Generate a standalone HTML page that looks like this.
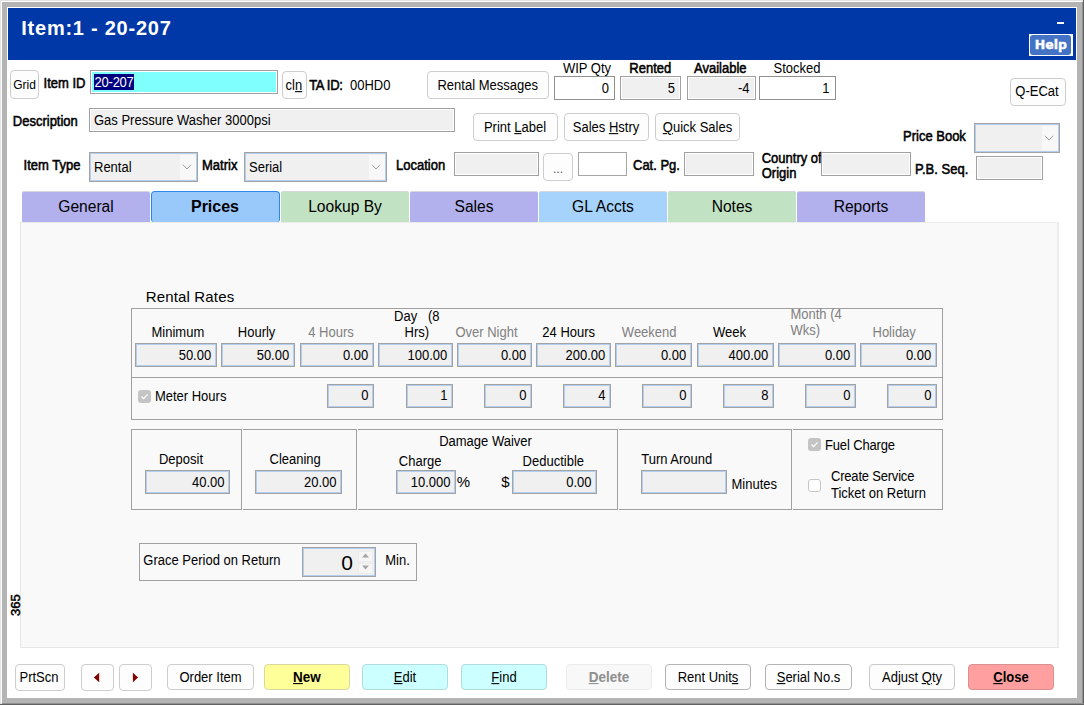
<!DOCTYPE html>
<html lang="en"><head><meta charset="utf-8"><title>Item:1 - 20-207</title>
<style>
html,body{margin:0;padding:0;}
body{width:1084px;height:705px;overflow:hidden;background:#fff;font-family:"Liberation Sans",sans-serif;color:#000;}
#win{position:relative;width:1084px;height:705px;overflow:hidden;background:#fff;}
#win div{position:absolute;box-sizing:border-box;}
.t{line-height:1;white-space:nowrap;transform:scaleY(1.08);transform-origin:0 84.65%;}
.fb{-webkit-text-stroke:0.5px #000;}
.btn{background:#fdfdfd;border:1px solid #cdcdcd;border-radius:4px;}
.inp{background:#f0f0f0;border:1px solid #a0a0a0;box-shadow:inset 0 0 0 1px #fff;}
.inw{background:#fff;border:1px solid #909090;}
.inb{background:#f0f0f0;border:1px solid #a3a3a3;box-shadow:inset 0 0 0 1px #b2cef0;}
.cmb{background:#f0f0f0;border:1px solid #a3a3a3;box-shadow:inset 0 0 0 1px #b2cef0;}
.grp{border:1px solid #a0a0a0;}
u{text-decoration:underline;text-underline-offset:1px;}

</style></head><body>
<div id="win">
<div class="" style="left:0px;top:0px;width:1084px;height:705px;background:#e3e3e3;"></div>
<div class="" style="left:1px;top:1px;width:1081px;height:702px;background:#fff;"></div>
<div class="" style="left:2px;top:2px;width:1081px;height:702px;background:#b4b4b4;"></div>
<div class="" style="left:1082px;top:2px;width:1px;height:703px;background:#909090;"></div>
<div class="" style="left:1083px;top:0px;width:1px;height:705px;background:#626262;"></div>
<div class="" style="left:2px;top:703px;width:1082px;height:1px;background:#909090;"></div>
<div class="" style="left:0px;top:704px;width:1084px;height:1px;background:#626262;"></div>
<div class="" style="left:7px;top:7px;width:1070px;height:691px;background:#fff;"></div>
<div class="" style="left:8px;top:8px;width:1068px;height:52px;background:#0038a8;"></div>
<div class="t" style="left:21.3px;top:18.47px;font-size:20px;font-weight:bold;color:#fff;letter-spacing:0.75px;transform:none;">Item:1 - 20-207</div>
<div class="" style="left:1057px;top:22px;width:7px;height:2px;background:#fff;"></div>
<div class="" style="left:1029px;top:34px;width:44px;height:22px;background:#fff;"></div>
<div class="" style="left:1030px;top:35px;width:41px;height:20px;background:#4472c4;border-radius:3px;"></div>
<div class="t" style="left:850.9px;width:400px;text-align:center;top:38.72px;font-size:12.5px;font-weight:bold;color:#fff;-webkit-text-stroke:0.4px #fff;font-family:'DejaVu Sans','Liberation Sans',sans-serif;transform:none;">Help</div>
<div class="btn" style="left:10px;top:70px;width:29px;height:29px;"></div>
<div class="t" style="left:-175.5px;width:400px;text-align:center;top:78.84px;font-size:12px;">Grid</div>
<div class="t fb" style="left:43.6px;top:76.50px;font-size:13px;">Item ID</div>
<div class="" style="left:90px;top:70px;width:188px;height:24px;background:#80ffff;border:1px solid #a0a0a6;box-shadow:inset 0 0 0 1px #fff;"></div>
<div class="" style="left:94px;top:74px;width:40px;height:16px;background:#000080;"></div>
<div class="t" style="left:94.6px;top:76.00px;font-size:13px;color:#fff;letter-spacing:-0.25px;">20-207</div>
<div class="btn" style="left:282px;top:71px;width:25px;height:28px;"></div>
<div class="t" style="left:93.9px;width:400px;text-align:center;top:78.70px;font-size:13px;">cl<u>n</u></div>
<div class="t fb" style="left:309.2px;top:78.60px;font-size:13px;letter-spacing:-0.3px;">TA ID:</div>
<div class="t" style="left:350px;top:78.60px;font-size:13px;">00HD0</div>
<div class="btn" style="left:426.5px;top:71px;width:122.5px;height:28px;"></div>
<div class="t" style="left:287.7px;width:400px;text-align:center;top:79.00px;font-size:13px;">Rental Messages</div>
<div class="t" style="left:387px;width:400px;text-align:center;top:61.50px;font-size:13px;">WIP Qty</div>
<div class="inw" style="left:554px;top:76px;width:61px;height:24px;"></div>
<div class="t" style="right:475px;top:81.50px;font-size:13px;">0</div>
<div class="t fb" style="left:450.3px;width:400px;text-align:center;top:61.50px;font-size:13px;">Rented</div>
<div class="inp" style="left:620px;top:76px;width:61px;height:24px;"></div>
<div class="t" style="right:409px;top:81.50px;font-size:13px;">5</div>
<div class="t fb" style="left:520.3px;width:400px;text-align:center;top:61.50px;font-size:13px;">Available</div>
<div class="inp" style="left:687px;top:76px;width:69px;height:24px;"></div>
<div class="t" style="right:334.5px;top:81.50px;font-size:13px;">-4</div>
<div class="t" style="left:597px;width:400px;text-align:center;top:61.50px;font-size:13px;">Stocked</div>
<div class="inw" style="left:759px;top:76px;width:77px;height:24px;"></div>
<div class="t" style="right:254.5px;top:81.50px;font-size:13px;">1</div>
<div class="btn" style="left:1010px;top:78px;width:55.5px;height:27.5px;"></div>
<div class="t" style="left:837px;width:400px;text-align:center;top:85.20px;font-size:13px;">Q-ECat</div>
<div class="t fb" style="left:12.8px;top:115.00px;font-size:13px;">Description</div>
<div class="inp" style="left:89px;top:108px;width:366px;height:24px;"></div>
<div class="t" style="left:94px;top:113.50px;font-size:13px;">Gas Pressure Washer 3000psi</div>
<div class="btn" style="left:473px;top:113px;width:85px;height:28px;"></div>
<div class="t" style="left:315px;width:400px;text-align:center;top:121.00px;font-size:13px;">Print <u>L</u>abel</div>
<div class="btn" style="left:564px;top:113px;width:85px;height:28px;"></div>
<div class="t" style="left:406px;width:400px;text-align:center;top:121.00px;font-size:13px;">Sales <u>H</u>stry</div>
<div class="btn" style="left:655px;top:113px;width:85px;height:28px;"></div>
<div class="t" style="left:497.5px;width:400px;text-align:center;top:121.00px;font-size:13px;"><u>Q</u>uick Sales</div>
<div class="t fb" style="left:903px;top:130.20px;font-size:13px;">Price Book</div>
<div class="cmb" style="left:974px;top:123px;width:86px;height:30px;"></div>
<div class="" style="left:1042px;top:126px;width:16px;height:24px;background:#f8f8f8;"></div>
<svg style="position:absolute;left:1043.2px;top:133.8px" width="12" height="8" viewBox="0 0 12 8"><path d="M2 1.8 L6 6 L10 1.8" fill="none" stroke="#9c9c9c" stroke-width="1"/></svg>
<div class="t fb" style="left:23.6px;top:159.00px;font-size:13px;">Item Type</div>
<div class="cmb" style="left:89px;top:152px;width:109px;height:30px;"></div>
<div class="" style="left:180px;top:155px;width:16px;height:24px;background:#f8f8f8;"></div>
<svg style="position:absolute;left:181.2px;top:162.8px" width="12" height="8" viewBox="0 0 12 8"><path d="M2 1.8 L6 6 L10 1.8" fill="none" stroke="#9c9c9c" stroke-width="1"/></svg>
<div class="t" style="left:94px;top:161.00px;font-size:13px;">Rental</div>
<div class="t fb" style="left:202px;top:159.00px;font-size:13px;">Matrix</div>
<div class="cmb" style="left:244px;top:152px;width:143px;height:30px;"></div>
<div class="" style="left:369px;top:155px;width:16px;height:24px;background:#f8f8f8;"></div>
<svg style="position:absolute;left:370.2px;top:162.8px" width="12" height="8" viewBox="0 0 12 8"><path d="M2 1.8 L6 6 L10 1.8" fill="none" stroke="#9c9c9c" stroke-width="1"/></svg>
<div class="t" style="left:249px;top:161.00px;font-size:13px;">Serial</div>
<div class="t fb" style="left:396px;top:159.00px;font-size:13px;">Location</div>
<div class="inp" style="left:454px;top:152px;width:85px;height:24px;"></div>
<div class="btn" style="left:543px;top:153px;width:30px;height:28px;"></div>
<div class="t" style="left:358px;width:400px;text-align:center;top:162.84px;font-size:12px;color:#555;">...</div>
<div class="inw" style="left:578px;top:152px;width:49px;height:24px;border-color:#a6a6a6;"></div>
<div class="t fb" style="left:633px;top:158.60px;font-size:13px;">Cat. Pg.</div>
<div class="inp" style="left:684px;top:152px;width:70px;height:24px;"></div>
<div class="t fb" style="left:761.7px;top:151.60px;font-size:13px;">Country of</div>
<div class="t fb" style="left:761.7px;top:166.50px;font-size:13px;">Origin</div>
<div class="inp" style="left:821px;top:152px;width:90px;height:24px;"></div>
<div class="t fb" style="left:915px;top:162.80px;font-size:13px;">P.B. Seq.</div>
<div class="inp" style="left:976px;top:156px;width:67px;height:24px;"></div>
<div class="" style="left:22px;top:191px;width:128px;height:31px;background:#b3b0ee;border-top:1px solid #d6d6dc;border-radius:2px 2px 0 0;"></div>
<div class="t" style="left:-114px;width:400px;text-align:center;top:198.79px;font-size:15.6px;transform:none;">General</div>
<div class="" style="left:151px;top:191px;width:129px;height:31px;background:#99c9fb;border:1px solid #2a86ea;border-bottom:none;border-radius:4px 4px 3px 3px;"></div>
<div class="t" style="left:15px;width:400px;text-align:center;top:199.36px;font-size:16px;font-weight:bold;transform:none;">Prices</div>
<div class="" style="left:281px;top:191px;width:128px;height:31px;background:#c1e2c3;border-top:1px solid #d6d6dc;border-radius:2px 2px 0 0;"></div>
<div class="t" style="left:145px;width:400px;text-align:center;top:198.79px;font-size:15.6px;transform:none;">Lookup By</div>
<div class="" style="left:410px;top:191px;width:128px;height:31px;background:#b3b0ee;border-top:1px solid #d6d6dc;border-radius:2px 2px 0 0;"></div>
<div class="t" style="left:274px;width:400px;text-align:center;top:198.79px;font-size:15.6px;transform:none;">Sales</div>
<div class="" style="left:539px;top:191px;width:128px;height:31px;background:#a6d3fb;border-top:1px solid #d6d6dc;border-radius:2px 2px 0 0;"></div>
<div class="t" style="left:403px;width:400px;text-align:center;top:198.79px;font-size:15.6px;transform:none;">GL Accts</div>
<div class="" style="left:668px;top:191px;width:128px;height:31px;background:#c1e2c3;border-top:1px solid #d6d6dc;border-radius:2px 2px 0 0;"></div>
<div class="t" style="left:532px;width:400px;text-align:center;top:198.79px;font-size:15.6px;transform:none;">Notes</div>
<div class="" style="left:797px;top:191px;width:128px;height:31px;background:#b3b0ee;border-top:1px solid #d6d6dc;border-radius:2px 2px 0 0;"></div>
<div class="t" style="left:661px;width:400px;text-align:center;top:198.79px;font-size:15.6px;transform:none;">Reports</div>
<div class="" style="left:20px;top:222px;width:1039px;height:426px;background:#f9f9f9;border:1px solid #e6e6e6;border-top-color:#ececec;border-right:2px solid #ededed;"></div>
<div class="t" style="left:145.8px;top:288.60px;font-size:15px;letter-spacing:0.15px;transform:none;">Rental Rates</div>
<div class="grp" style="left:131px;top:308px;width:812px;height:70px;"></div>
<div class="grp" style="left:131px;top:377px;width:812px;height:43px;"></div>
<div class="inb" style="left:135px;top:343px;width:82px;height:24px;"></div>
<div class="t" style="right:872.8px;top:348.80px;font-size:13px;">50.00</div>
<div class="inb" style="left:221px;top:343px;width:74px;height:24px;"></div>
<div class="t" style="right:794.8px;top:348.80px;font-size:13px;">50.00</div>
<div class="inb" style="left:300px;top:343px;width:74px;height:24px;"></div>
<div class="t" style="right:715.8px;top:348.80px;font-size:13px;">0.00</div>
<div class="inb" style="left:378px;top:343px;width:75px;height:24px;"></div>
<div class="t" style="right:636.8px;top:348.80px;font-size:13px;">100.00</div>
<div class="inb" style="left:457px;top:343px;width:75px;height:24px;"></div>
<div class="t" style="right:557.8px;top:348.80px;font-size:13px;">0.00</div>
<div class="inb" style="left:536px;top:343px;width:75px;height:24px;"></div>
<div class="t" style="right:478.8px;top:348.80px;font-size:13px;">200.00</div>
<div class="inb" style="left:615px;top:343px;width:77px;height:24px;"></div>
<div class="t" style="right:397.8px;top:348.80px;font-size:13px;">0.00</div>
<div class="inb" style="left:697px;top:343px;width:77px;height:24px;"></div>
<div class="t" style="right:315.8px;top:348.80px;font-size:13px;">400.00</div>
<div class="inb" style="left:778px;top:343px;width:78px;height:24px;"></div>
<div class="t" style="right:233.8px;top:348.80px;font-size:13px;">0.00</div>
<div class="inb" style="left:860px;top:343px;width:77px;height:24px;"></div>
<div class="t" style="right:152.8px;top:348.80px;font-size:13px;">0.00</div>
<div class="t" style="left:-22.1px;width:400px;text-align:center;top:326.00px;font-size:13px;">Minimum</div>
<div class="t" style="left:56.6px;width:400px;text-align:center;top:326.00px;font-size:13px;">Hourly</div>
<div class="t" style="left:131px;width:400px;text-align:center;top:326.00px;font-size:13px;color:#808080;">4 Hours</div>
<div class="t" style="left:216.8px;width:400px;text-align:center;top:310.00px;font-size:13px;">Day&nbsp;&nbsp; (8</div>
<div class="t" style="left:216.8px;width:400px;text-align:center;top:326.00px;font-size:13px;">Hrs)</div>
<div class="t" style="left:286.5px;width:400px;text-align:center;top:326.00px;font-size:13px;color:#808080;">Over Night</div>
<div class="t" style="left:368.7px;width:400px;text-align:center;top:326.00px;font-size:13px;">24 Hours</div>
<div class="t" style="left:449.2px;width:400px;text-align:center;top:326.00px;font-size:13px;color:#808080;">Weekend</div>
<div class="t" style="left:529.5px;width:400px;text-align:center;top:326.00px;font-size:13px;">Week</div>
<div class="t" style="left:790.4px;top:307.70px;font-size:13px;color:#808080;">Month (4</div>
<div class="t" style="left:790.4px;top:324.00px;font-size:13px;color:#808080;">Wks)</div>
<div class="t" style="left:694.2px;width:400px;text-align:center;top:326.00px;font-size:13px;color:#808080;">Holiday</div>
<div class="" style="left:138px;top:390px;width:13px;height:13px;background:#c4c4c4;border-radius:3px;"></div>
<svg style="position:absolute;left:139px;top:391px" width="11" height="11" viewBox="0 0 11 11"><path d="M2.5 5.5 L4.6 7.6 L8.6 3.4" fill="none" stroke="#fff" stroke-width="1.2"/></svg>
<div class="t" style="left:154.9px;top:390.30px;font-size:13px;">Meter Hours</div>
<div class="inb" style="left:327px;top:384px;width:47px;height:24px;"></div>
<div class="t" style="right:715.5px;top:389.30px;font-size:13px;">0</div>
<div class="inb" style="left:406px;top:384px;width:47px;height:24px;"></div>
<div class="t" style="right:636.5px;top:389.30px;font-size:13px;">1</div>
<div class="inb" style="left:484px;top:384px;width:48px;height:24px;"></div>
<div class="t" style="right:557.5px;top:389.30px;font-size:13px;">0</div>
<div class="inb" style="left:563px;top:384px;width:48px;height:24px;"></div>
<div class="t" style="right:478.5px;top:389.30px;font-size:13px;">4</div>
<div class="inb" style="left:642px;top:384px;width:50px;height:24px;"></div>
<div class="t" style="right:397.5px;top:389.30px;font-size:13px;">0</div>
<div class="inb" style="left:723px;top:384px;width:51px;height:24px;"></div>
<div class="t" style="right:315.5px;top:389.30px;font-size:13px;">8</div>
<div class="inb" style="left:805px;top:384px;width:51px;height:24px;"></div>
<div class="t" style="right:233.5px;top:389.30px;font-size:13px;">0</div>
<div class="inb" style="left:887px;top:384px;width:50px;height:24px;"></div>
<div class="t" style="right:152.5px;top:389.30px;font-size:13px;">0</div>
<div class="grp" style="left:131px;top:429px;width:111px;height:81px;"></div>
<div class="grp" style="left:243px;top:429px;width:114px;height:81px;border-left:none;"></div>
<div class="grp" style="left:358px;top:429px;width:260px;height:81px;border-left:none;"></div>
<div class="grp" style="left:619px;top:429px;width:173px;height:81px;border-left:none;"></div>
<div class="grp" style="left:793px;top:429px;width:150px;height:81px;border-left:none;"></div>
<div class="t" style="left:-19px;width:400px;text-align:center;top:452.80px;font-size:13px;">Deposit</div>
<div class="inb" style="left:145px;top:470px;width:85px;height:24px;"></div>
<div class="t" style="right:859.5px;top:475.70px;font-size:13px;">40.00</div>
<div class="t" style="left:95.2px;width:400px;text-align:center;top:452.80px;font-size:13px;">Cleaning</div>
<div class="inb" style="left:255px;top:470px;width:87px;height:24px;"></div>
<div class="t" style="right:747.5px;top:475.70px;font-size:13px;">20.00</div>
<div class="t" style="left:285.5px;width:400px;text-align:center;top:435.00px;font-size:13px;">Damage Waiver</div>
<div class="t" style="left:220.2px;width:400px;text-align:center;top:455.00px;font-size:13px;">Charge</div>
<div class="inb" style="left:396px;top:470px;width:60px;height:24px;"></div>
<div class="t" style="right:633.5px;top:475.70px;font-size:13px;">10.000</div>
<div class="t" style="left:456.8px;top:474.30px;font-size:15px;transform:none;">%</div>
<div class="t" style="left:501.2px;top:474.30px;font-size:15px;transform:none;">$</div>
<div class="t" style="left:353.3px;width:400px;text-align:center;top:455.00px;font-size:13px;">Deductible</div>
<div class="inb" style="left:512px;top:470px;width:85px;height:24px;"></div>
<div class="t" style="right:492.5px;top:475.70px;font-size:13px;">0.00</div>
<div class="t" style="left:641.2px;top:452.80px;font-size:13px;">Turn Around</div>
<div class="inb" style="left:641px;top:470px;width:86px;height:24px;"></div>
<div class="t" style="left:731.5px;top:478.00px;font-size:13px;">Minutes</div>
<div class="" style="left:808px;top:438px;width:13px;height:13px;background:#c4c4c4;border-radius:3px;"></div>
<svg style="position:absolute;left:809px;top:439px" width="11" height="11" viewBox="0 0 11 11"><path d="M2.5 5.5 L4.6 7.6 L8.6 3.4" fill="none" stroke="#fff" stroke-width="1.2"/></svg>
<div class="t" style="left:825px;top:438.80px;font-size:13px;letter-spacing:-0.15px;">Fuel Charge</div>
<div class="" style="left:808px;top:479px;width:13px;height:13px;background:#fff;border:1px solid #c6c6c6;border-radius:3px;"></div>
<div class="t" style="left:831px;top:469.80px;font-size:13px;letter-spacing:-0.2px;">Create Service</div>
<div class="t" style="left:831px;top:486.50px;font-size:13px;">Ticket on Return</div>
<div class="grp" style="left:139px;top:543px;width:278px;height:38px;"></div>
<div class="t" style="left:143.3px;top:553.90px;font-size:13px;">Grace Period on Return</div>
<div class="inb" style="left:302px;top:547px;width:74px;height:30px;"></div>
<div class="t" style="right:731px;top:552.02px;font-size:21px;transform:none;">0</div>
<div class="" style="left:358px;top:551px;width:15px;height:11px;background:#f6f6f6;border:1px solid #ececec;"></div>
<div class="" style="left:358px;top:563px;width:15px;height:11px;background:#f6f6f6;border:1px solid #ececec;"></div>
<svg style="position:absolute;left:361px;top:552px" width="9" height="22" viewBox="0 0 9 22"><path d="M1 5.5 L4.5 1.5 L8 5.5 Z" fill="#a6a6a6"/><path d="M1 13.5 L4.5 17.5 L8 13.5 Z" fill="#a6a6a6"/></svg>
<div class="t" style="left:385.2px;top:553.90px;font-size:13px;">Min.</div>
<div class="t fb" style="left:9.4px;top:616px;font-size:13px;transform-origin:0 0;transform:rotate(-90deg);">365</div>
<div class="btn" style="left:15px;top:664px;width:50px;height:27px;"></div>
<div class="t" style="left:-161px;width:400px;text-align:center;top:671.00px;font-size:13px;">PrtScn</div>
<div class="btn" style="left:81px;top:664px;width:33px;height:27px;"></div>
<div class="t" style="left:-102.5px;width:400px;text-align:center;top:671.00px;font-size:13px;"></div>
<div class="btn" style="left:119px;top:664px;width:33px;height:27px;"></div>
<div class="t" style="left:-64.5px;width:400px;text-align:center;top:671.00px;font-size:13px;"></div>
<svg style="position:absolute;left:93px;top:672px" width="8" height="11" viewBox="0 0 8 11"><path d="M6.2 0.7 L0.8 5.45 L6.2 10.2 Z" fill="#800000"/></svg>
<svg style="position:absolute;left:132px;top:672px" width="8" height="11" viewBox="0 0 8 11"><path d="M0.9 0.7 L6.1 5.45 L0.9 10.2 Z" fill="#800000"/></svg>
<div class="btn" style="left:167px;top:664px;width:87px;height:26px;"></div>
<div class="t" style="left:10.5px;width:400px;text-align:center;top:671.00px;font-size:13px;">Order Item</div>
<div class="btn" style="left:264px;top:664px;width:86px;height:26px;background:#ffff99;border-color:#d8d8a0;"></div>
<div class="t" style="left:107px;width:400px;text-align:center;top:670.57px;font-size:13.5px;font-weight:bold;"><u>N</u>ew</div>
<div class="btn" style="left:362px;top:664px;width:86px;height:26px;background:#ccffff;border-color:#b0dcdc;"></div>
<div class="t" style="left:205px;width:400px;text-align:center;top:671.00px;font-size:13px;"><u>E</u>dit</div>
<div class="btn" style="left:461px;top:664px;width:86px;height:26px;background:#ccffff;border-color:#b0dcdc;"></div>
<div class="t" style="left:304px;width:400px;text-align:center;top:671.00px;font-size:13px;"><u>F</u>ind</div>
<div class="btn" style="left:566px;top:664px;width:86px;height:26px;background:#f8f8f8;border-color:#ececec;"></div>
<div class="t" style="left:409px;width:400px;text-align:center;top:670.57px;font-size:13.5px;font-weight:bold;color:#8e8e8e;"><u>D</u>elete</div>
<div class="btn" style="left:665px;top:664px;width:86px;height:26px;border-color:#b4b4b4;"></div>
<div class="t" style="left:508px;width:400px;text-align:center;top:671.00px;font-size:13px;">Rent Unit<u>s</u></div>
<div class="btn" style="left:765px;top:664px;width:87px;height:26px;border-color:#b4b4b4;"></div>
<div class="t" style="left:608.5px;width:400px;text-align:center;top:671.00px;font-size:13px;"><u>S</u>erial No.s</div>
<div class="btn" style="left:869px;top:664px;width:86px;height:26px;border-color:#cacaca;"></div>
<div class="t" style="left:712px;width:400px;text-align:center;top:671.00px;font-size:13px;">Adjust <u>Q</u>ty</div>
<div class="btn" style="left:968px;top:664px;width:86px;height:26px;background:#ff9f9f;border-color:#d89090;"></div>
<div class="t" style="left:811px;width:400px;text-align:center;top:671.00px;font-size:13px;font-weight:bold;"><u>C</u>lose</div>
</div>
</body></html>
